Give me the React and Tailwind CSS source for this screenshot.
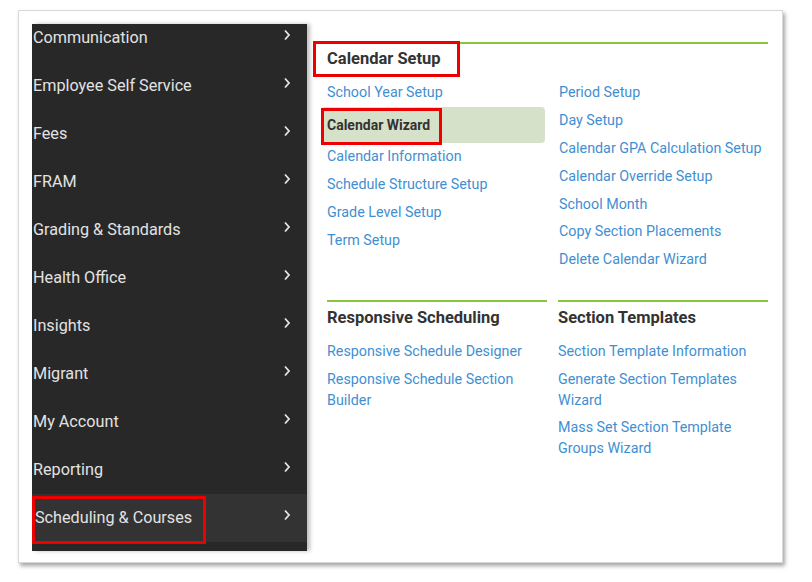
const menu = [
  'Communication',
  'Employee Self Service',
  'Fees',
  'FRAM',
  'Grading & Standards',
  'Health Office',
  'Insights',
  'Migrant',
  'My Account',
  'Reporting',
  'Scheduling & Courses',
];

const calLeft = [
  'School Year Setup',
  'Calendar Wizard',
  'Calendar Information',
  'Schedule Structure Setup',
  'Grade Level Setup',
  'Term Setup',
];

const calRight = [
  'Period Setup',
  'Day Setup',
  'Calendar GPA Calculation Setup',
  'Calendar Override Setup',
  'School Month',
  'Copy Section Placements',
  'Delete Calendar Wizard',
];

const Chevron = () => (
  <svg width="8" height="12" viewBox="0 0 8 12" className="mb-[6px] mr-[16px]">
    <path d="M2 1.5 L6 6 L2 10.5" fill="none" stroke="#e4e4e4" strokeWidth="1.8" />
  </svg>
);

const LinkRow = ({ children }) => (
  <div className="py-[3.4px] text-[14.3px] leading-[21px] text-[#3f8fd2]">{children}</div>
);

const Sidebar = () => (
  <div className="w-[275px] h-[527px] bg-[#282828] overflow-hidden shrink-0 shadow-[3px_0_4px_rgba(0,0,0,0.25)] relative z-10">
    <div className="-mt-[10px]">
      {menu.map((item) => {
        const active = item === 'Scheduling & Courses';
        return (
          <div
            key={item}
            className={`relative h-[48px] flex items-center justify-between ${
              active ? 'bg-[#333333] pl-[3px]' : 'pl-[1px]'
            }`}
          >
            <span className="text-[16.2px] text-[#e2e2e2]">{item}</span>
            <Chevron />
            {active && (
              <div className="absolute left-0 top-[2px] w-[174px] h-[48px] border-[3px] border-[#ee0000]" />
            )}
          </div>
        );
      })}
    </div>
  </div>
);

export default function App() {
  return (
    <div className="w-[812px] h-[582px] bg-white pt-[10px] pl-[18px]" style={{ fontFamily: 'Roboto, "Liberation Sans", sans-serif' }}>
      <div className="w-[765px] h-[553px] bg-white border border-[#d8d8d8] shadow-[2px_3px_4px_rgba(0,0,0,0.35)] pt-[13px] pl-[13px] flex">
        <Sidebar />
        <div className="pl-[20px] w-[461px]">
          {/* Calendar Setup */}
          <div className="relative border-t-[2px] border-[#8cc63f] mt-[18px]">
            <div className="absolute -left-[14px] -top-[3px] w-[147px] h-[36px] border-[3px] border-[#ee0000] bg-transparent" />
            <div className="relative pt-[3px] text-[16.5px] leading-[24px] font-bold text-[#333]">
              Calendar Setup
            </div>
          </div>
          <div className="grid grid-cols-[220px_210px] gap-x-[11px] mt-[8px]">
            <div>
              {calLeft.map((l) =>
                l === 'Calendar Wizard' ? (
                  <div
                    key={l}
                    className="relative -ml-[6px] mr-[2px] pl-[6px] py-[8px] rounded-[4px] bg-[#d6e1c9] text-[14px] leading-[20px] font-bold text-[#333]"
                  >
                    {l}
                    <div className="absolute left-0 top-[1px] w-[121px] h-[37px] border-[3px] border-[#ee0000]" />
                  </div>
                ) : (
                  <LinkRow key={l}>{l}</LinkRow>
                )
              )}
            </div>
            <div className="pl-[1px]">
              {calRight.map((l) => (
                <LinkRow key={l}>{l}</LinkRow>
              ))}
            </div>
          </div>

          {/* Lower sections */}
          <div className="grid grid-cols-[220px_210px] gap-x-[11px] mt-[27px]">
            <div>
              <div className="border-t-[2px] border-[#8cc63f] pt-[4px] text-[16.5px] leading-[24px] font-bold text-[#333]">
                Responsive Scheduling
              </div>
              <div className="mt-[7px]">
                <LinkRow>Responsive Schedule Designer</LinkRow>
                <LinkRow>Responsive Schedule Section Builder</LinkRow>
              </div>
            </div>
            <div>
              <div className="border-t-[2px] border-[#8cc63f] pt-[4px] text-[16.5px] leading-[24px] font-bold text-[#333]">
                Section Templates
              </div>
              <div className="mt-[7px]">
                <LinkRow>Section Template Information</LinkRow>
                <LinkRow>Generate Section Templates Wizard</LinkRow>
                <LinkRow>Mass Set Section Template Groups Wizard</LinkRow>
              </div>
            </div>
          </div>
        </div>
      </div>
    </div>
  );
}
